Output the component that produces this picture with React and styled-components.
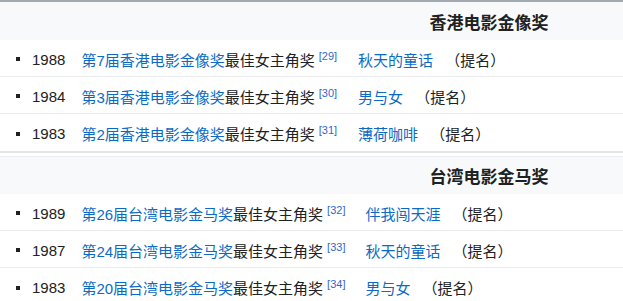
import styled, { createGlobalStyle } from "styled-components"

const Global = createGlobalStyle`
  body {
    margin: 0;
    background: #ffffff;
    font-family: "Liberation Sans", "Noto Sans CJK SC", sans-serif;
    color: #202122;
  }
`;

const Page = styled.div`
  width: 623px;
  border-top: 2px solid #a2a9b1;
`;

const Section = styled.section`
  border-bottom: ${props => (props.last ? "none" : "2px solid #e2e4e8")};
  margin-bottom: ${props => (props.last ? "0" : "3px")};
`;

const Header = styled.div`
  height: 38px;
  box-sizing: border-box;
  border-top: ${props => (props.first ? "none" : "1px solid #eaecf0")};
  background-color: #f8f9fa;
  display: flex;
  align-items: center;
  justify-content: center;
  padding-left: 355px;
  font-family: "Noto Sans CJK SC", sans-serif;
  font-weight: 700;
  font-size: 17px;
  color: #202122;
`;

const List = styled.ul`
  list-style: none;
  margin: 0;
  padding: 0;
`;

const Row = styled.li`
  height: 37px;
  box-sizing: border-box;
  border-bottom: ${props => (props.last ? "none" : "1px solid #eaecf0")};
  display: flex;
  align-items: center;
  padding: 2px 0 0 16px;
  font-size: 15px;
`;

const Bullet = styled.span`
  width: 4px;
  height: 4px;
  background-color: #202122;
  margin-right: 12px;
  flex-shrink: 0;
`;

const Year = styled.span`
  font-family: "Liberation Sans", sans-serif;
  font-size: 15px;
  color: #202122;
  margin-right: 16px;
`;

const Award = styled.span`
  font-family: "Liberation Sans", "Noto Sans CJK SC", sans-serif;
  margin-right: ${props => props.gap}px;
  white-space: nowrap;
`;

const Link = styled.a`
  color: #0b6bc4;
  text-decoration: none;
`;

const Ref = styled.sup`
  font-family: "Liberation Sans", sans-serif;
  font-size: 11px;
  color: #3366cc;
  margin-left: 4px;
  vertical-align: 6px;
  line-height: 0;
`;

const Film = styled.a`
  font-family: "Noto Sans CJK SC", sans-serif;
  color: #0b6bc4;
  text-decoration: none;
  margin-right: 12px;
`;

const Note = styled.span`
  font-family: "Noto Sans CJK SC", sans-serif;
  color: #202122;
`;

const sections = [
  {
    title: "香港电影金像奖",
    gap: 21,
    rows: [
      { year: "1988", award: "第7届香港电影金像奖", ref: 29, film: "秋天的童话" },
      { year: "1984", award: "第3届香港电影金像奖", ref: 30, film: "男与女" },
      { year: "1983", award: "第2届香港电影金像奖", ref: 31, film: "薄荷咖啡" },
    ],
  },
  {
    title: "台湾电影金马奖",
    gap: 20,
    rows: [
      { year: "1989", award: "第26届台湾电影金马奖", ref: 32, film: "伴我闯天涯" },
      { year: "1987", award: "第24届台湾电影金马奖", ref: 33, film: "秋天的童话" },
      { year: "1983", award: "第20届台湾电影金马奖", ref: 34, film: "男与女" },
    ],
  },
];

export default function App() {
  return (
    <Page>
      <Global />
      {sections.map((section, si) => (
        <Section key={section.title} last={si === sections.length - 1}>
          <Header first={si === 0}>{section.title}</Header>
          <List>
            {section.rows.map((row, ri) => (
              <Row key={row.award} last={ri === section.rows.length - 1}>
                <Bullet />
                <Year>{row.year}</Year>
                <Award gap={section.gap}>
                  <Link href="#">{row.award}</Link>最佳女主角奖
                  <Ref>[{row.ref}]</Ref>
                </Award>
                <Film href="#">{row.film}</Film>
                <Note>（提名）</Note>
              </Row>
            ))}
          </List>
        </Section>
      ))}
    </Page>
  );
}
